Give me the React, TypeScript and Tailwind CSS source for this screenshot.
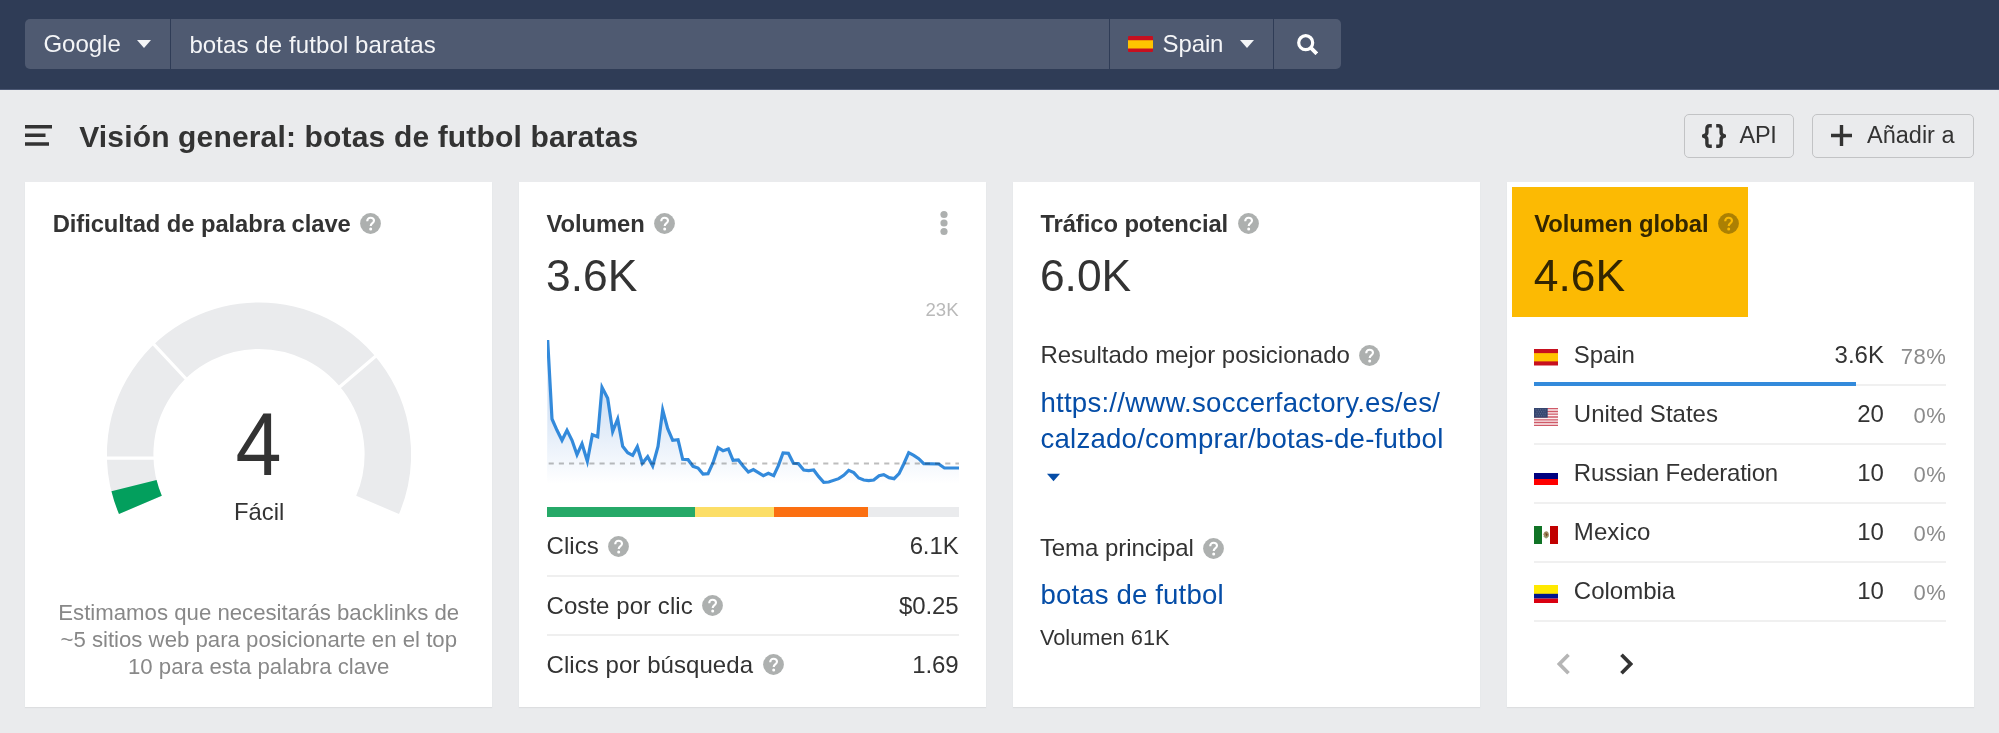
import type { ReactNode } from "react";

function HelpIcon() {
  return (
    <svg viewBox="0 0 21 21" className="h-[21px] w-[21px] shrink-0">
      <circle cx="10.5" cy="10.5" r="10.4" fill="#adb0af" />
      <path
        d="M7.2 8.2C7.2 6 8.6 4.8 10.6 4.8C12.6 4.8 14 6 14 7.7C14 10.1 10.7 10.1 10.7 13"
        fill="none"
        stroke="#fff"
        strokeWidth="2.1"
      />
      <circle cx="10.7" cy="15.9" r="1.5" fill="#fff" />
    </svg>
  );
}

function Caret({ className }: { className: string }) {
  return (
    <svg viewBox="0 0 14 8" className={className}>
      <path d="M0 0H14L7 8Z" fill="currentColor" />
    </svg>
  );
}

function SpainFlag({ className }: { className: string }) {
  return (
    <svg viewBox="0 0 24 16" preserveAspectRatio="none" className={className}>
      <path d="M0 0H24V16H0Z" fill="#c7101f" />
      <path d="M0 4H24V12H0Z" fill="#ffc400" />
    </svg>
  );
}

function UsFlag({ className }: { className: string }) {
  return (
    <svg viewBox="0 0 24 18" preserveAspectRatio="none" className={className}>
      <path d="M0 0H24V18H0Z" fill="#fbeff0" />
      <path
        d="M0 .7H24M0 3.5H24M0 6.2H24M0 9H24M0 11.8H24M0 14.5H24M0 17.3H24"
        stroke="#cf5a68"
        strokeWidth="1.3"
      />
      <path d="M0 0H13.7V9.7H0Z" fill="#35456f" />
      <path
        d="M1.5 1.8H13M2.5 3.8H12M1.5 5.8H13M2.5 7.8H12"
        stroke="#8791ac"
        strokeWidth=".6"
        strokeDasharray="1 1.3"
      />
    </svg>
  );
}

function RussiaFlag({ className }: { className: string }) {
  return (
    <svg viewBox="0 0 24 18" preserveAspectRatio="none" className={className}>
      <path d="M0 0H24V6H0Z" fill="#fff" />
      <path d="M0 6H24V12H0Z" fill="#00007f" />
      <path d="M0 12H24V18H0Z" fill="#fe0000" />
    </svg>
  );
}

function MexicoFlag({ className }: { className: string }) {
  return (
    <svg viewBox="0 0 24 18" preserveAspectRatio="none" className={className}>
      <path d="M0 0H24V18H0Z" fill="#fff" />
      <path d="M0 0H8V18H0Z" fill="#107326" />
      <path d="M16 0H24V18H16Z" fill="#c10000" />
      <path d="M9.4 8.2Q10 5.2 12.6 5.2Q15.2 6 14.8 9.5Q14 12 12 12.4Q9.8 11.6 9.4 8.2Z" fill="#a08a62" />
      <path d="M11.3 6.4L13.8 8.6L12.2 10.4Z" fill="#6d4424" />
      <path d="M9.6 10Q12 13.6 14.6 10" fill="none" stroke="#8ea77c" strokeWidth=".9" />
    </svg>
  );
}

function ColombiaFlag({ className }: { className: string }) {
  return (
    <svg viewBox="0 0 24 18" preserveAspectRatio="none" className={className}>
      <path d="M0 0H24V9H0Z" fill="#ffe900" />
      <path d="M0 8.8H24V13.6H0Z" fill="#00148e" />
      <path d="M0 13.6H24V18H0Z" fill="#da0010" />
    </svg>
  );
}

function TopBar() {
  return (
    <header className="flex h-[90px] shrink-0 items-start border-b border-[#4c5874] bg-[#2f3c56] pl-[25.4px] pt-[18.6px] text-[24px] leading-[50.6px] text-[#f4f5f7]">
      <div className="flex h-[50.6px] gap-px overflow-hidden rounded-[5px]">
        <button className="flex w-[145px] items-center bg-[#4f5a71] pl-[18px]">
          <span className="w-[76px] pt-px">Google</span>
          <Caret className="ml-[18px] mt-px h-2 w-3.5" />
        </button>
        <div className="w-[937.6px] bg-[#4f5a71] pl-[18px] pt-px tracking-[0.1px]">botas de futbol baratas</div>
        <button className="flex w-[163px] items-center bg-[#4f5a71] pl-[18.5px]">
          <SpainFlag className="h-[16.7px] w-[25px] rounded-[1px]" />
          <span className="ml-[9px] w-[59px] pt-px tracking-[-0.1px]">Spain</span>
          <Caret className="ml-[18.5px] mt-px h-2 w-3.5" />
        </button>
        <button className="flex w-[67px] items-center justify-center bg-[#4f5a71]">
          <svg viewBox="0 0 21 21" className="mt-px h-[21px] w-[21px]" fill="none" stroke="#fff">
            <circle cx="8.7" cy="8.7" r="7" strokeWidth="3.2" />
            <path d="M13.4 13.4L19.8 19.8" strokeWidth="3.8" />
          </svg>
        </button>
      </div>
    </header>
  );
}

function TitleRow() {
  return (
    <div className="flex h-[91.5px] items-start justify-between px-[25.4px] pt-[23.5px]">
      <div className="flex h-[44px] items-center">
        <svg viewBox="0 0 27 21" className="h-[21px] w-[27px]" stroke="#333" strokeWidth="3.4">
          <path d="M0 1.7H27M0 10.3H20.5M0 19H24" />
        </svg>
        <h1 className="ml-[26.8px] mt-[2px] text-[30px] font-bold leading-[40px] tracking-[0.16px]">
          Visión general: botas de futbol baratas
        </h1>
      </div>
      <div className="flex gap-[17.4px] text-[23.5px] leading-[42px]">
        <button className="flex h-[44.6px] w-[110px] items-center rounded-[5px] border-[1.7px] border-[#c2c3c5] pl-[17px]">
          <svg viewBox="0 0 24 24" className="h-6 w-6" fill="none" stroke="#333" strokeWidth="3.4">
            <path d="M9.8 1.8H7.6Q4.9 1.8 4.9 4.6V8.6Q4.9 11 1.4 12Q4.9 13 4.9 15.4V19.4Q4.9 22.2 7.6 22.2H9.8" />
            <path d="M14.2 1.8H16.4Q19.1 1.8 19.1 4.6V8.6Q19.1 11 22.6 12Q19.1 13 19.1 15.4V19.4Q19.1 22.2 16.4 22.2H14.2" />
          </svg>
          <span className="ml-[13.4px] -mt-px tracking-[-0.3px]">API</span>
        </button>
        <button className="flex h-[44.6px] w-[162px] items-center rounded-[5px] border-[1.7px] border-[#c2c3c5] pl-[18.4px]">
          <svg viewBox="0 0 21 21" className="h-[21px] w-[21px]" stroke="#333" strokeWidth="3.4">
            <path d="M10.5 0V21M0 10.5H21" />
          </svg>
          <span className="-mt-px ml-[15px]">Añadir a</span>
        </button>
      </div>
    </div>
  );
}

function Card({ title, menu, children }: { title: string; menu?: boolean; children: ReactNode }) {
  return (
    <section className="relative flex h-[525.5px] flex-col bg-white px-[27.4px] pt-[27.6px] shadow-[0_1px_1px_#dddee0]">
      <div className="flex h-[30px] shrink-0 items-center">
        <h2 className="text-[23.8px] font-bold leading-[30px] tracking-[-0.08px]">{title}</h2>
        <span className="-mt-[2px] ml-[9.5px]">
          <HelpIcon />
        </span>
        {menu && (
          <svg viewBox="0 0 8 26" className="-mt-[2px] ml-auto mr-[11px] h-[26px] w-2" fill="#adb0af">
            <circle cx="4" cy="4.5" r="3.6" />
            <circle cx="4" cy="13" r="3.6" />
            <circle cx="4" cy="21.5" r="3.6" />
          </svg>
        )}
      </div>
      {children}
    </section>
  );
}

function BigNumber({ children }: { children: ReactNode }) {
  return <div className="-ml-[0.5px] mt-[11.6px] shrink-0 text-[44.4px] leading-[49.6px]">{children}</div>;
}

function DifficultyCard() {
  return (
    <Card title="Dificultad de palabra clave">
      <svg
        viewBox="107 302 304 224"
        className="mt-[63px] h-[224px] w-[304px] shrink-0 self-center text-[#333]"
        fontFamily="Liberation Sans, Arial, sans-serif"
      >
        <path d="M140.4 504.9A128.85 128.85 0 1 1 377.6 504.9" fill="none" stroke="#eaebed" strokeWidth="46.5" />
        <path d="M140.4 504.9A128.85 128.85 0 0 1 134 485.7" fill="none" stroke="#039f5d" strokeWidth="46.5" />
        <path d="M105 458.1H156M189 382L152 342.3M337 389.3L378.5 353.8" stroke="#fff" strokeWidth="3.2" />
        <text transform="translate(258.5 475) scale(0.93 1)" fontSize="89" textAnchor="middle" fill="currentColor">
          4
        </text>
        <text x="259.2" y="520.3" fontSize="23.8" textAnchor="middle" fill="currentColor">
          Fácil
        </text>
      </svg>
      <p className="-mx-4 mt-[74.2px] text-center text-[22.2px] leading-[26.9px] text-[#888]">
        Estimamos que necesitarás backlinks de
        <br />
        ~5 sitios web para posicionarte en el top
        <br />
        10 para esta palabra clave
      </p>
    </Card>
  );
}

const TREND =
  "52,60 65,297 80,331 95,361 110,331 125,361 140,404 155,371 171,424 186,344 202,350 215,202 232,235 247,335 262,297 277,379 292,398 307,406 321,380 336,430 352,410 367,438 383,379 397,270 412,326 427,361 443,359 457,418 473,419 488,439 503,444 518,462 533,461 548,428 563,383 578,392 594,387 608,421 624,420 638,438 654,456 669,449 684,458 699,467 714,460 730,467 744,437 758,399 774,400 789,430 804,431 820,450 835,452 850,450 865,470 880,487 895,486 925,476 940,466 955,451 970,458 985,474 1000,480 1015,482 1030,480 1046,467 1060,464 1076,473 1091,476 1106,461 1120,432 1135,398 1150,406 1165,416 1180,431 1225,432 1242,444 1286,444";

function Metric({ label, value, last }: { label: string; value: string; last?: boolean }) {
  return (
    <div
      className={
        last
          ? "flex h-[59.2px] shrink-0 items-center pb-px"
          : "flex h-[59.2px] shrink-0 items-center border-b-2 border-[#efefef] pt-px"
      }
    >
      <span className="tracking-[0.06px]">{label}</span>
      <span className="ml-[9.5px]">
        <HelpIcon />
      </span>
      <span className="ml-auto tracking-[-0.1px]">{value}</span>
    </div>
  );
}

function VolumeCard() {
  return (
    <Card title="Volumen" menu>
      <BigNumber>3.6K</BigNumber>
      <div className="h-5 shrink-0 text-right text-[18.6px] leading-[20px] text-[#b9b9b9]">23K</div>
      <svg viewBox="50 51 1236 450" className="mt-[16.8px] h-[150px] w-full shrink-0" preserveAspectRatio="none">
        <defs>
          <linearGradient id="trendFill" gradientUnits="userSpaceOnUse" x1="0" y1="60" x2="0" y2="492">
            <stop offset="0" stopColor="#b3cdee" />
            <stop offset="1" stopColor="#ffffff" />
          </linearGradient>
        </defs>
        <polygon points={`${TREND} 1286,490 50,490`} fill="url(#trendFill)" />
        <polyline points={TREND} fill="none" stroke="#338adb" strokeWidth="9.6" strokeMiterlimit="10" />
        <path
          d="M55 430.5H1286"
          stroke="#bdbdbd"
          strokeWidth="5.4"
          strokeDasharray="15.3 15.2"
          className="mix-blend-multiply"
        />
      </svg>
      <div className="mt-5 flex h-[10.3px] shrink-0 bg-[#eaebed]">
        <div className="w-[36%] bg-[#26a968]" />
        <div className="w-[19.1%] bg-[#fcde67]" />
        <div className="w-[22.9%] bg-[#fb6f11]" />
      </div>
      <Metric label="Clics" value="6.1K" />
      <Metric label="Coste por clic" value="$0.25" />
      <Metric label="Clics por búsqueda" value="1.69" last />
    </Card>
  );
}

function TrafficCard() {
  return (
    <Card title="Tráfico potencial">
      <BigNumber>6.0K</BigNumber>
      <div className="mt-[40px] flex h-[30px] items-center">
        <span>Resultado mejor posicionado</span>
        <span className="ml-[9.5px]">
          <HelpIcon />
        </span>
      </div>
      <a className="-mr-4 mt-[14.4px] text-[27.6px] leading-[36.3px] tracking-[0.24px] text-[#054da7]">
        https://www.soccerfactory.es/es/
        <br />
        calzado/comprar/botas-de-futbol
      </a>
      <Caret className="ml-[7px] mt-[15.5px] h-[9px] w-[13px] text-[#054da7]" />
      <div className="mt-[51.7px] flex h-[30px] items-center">
        <span className="-ml-[0.5px] tracking-[-0.06px]">Tema principal</span>
        <span className="ml-[9.5px]">
          <HelpIcon />
        </span>
      </div>
      <a className="mt-[13.1px] text-[27.6px] leading-[36px] tracking-[0.15px] text-[#054da7]">botas de futbol</a>
      <div className="mt-[12.9px] text-[21.8px] leading-[26px] -ml-[0.5px]">Volumen 61K</div>
    </Card>
  );
}

const COUNTRIES = [
  {
    name: "Spain",
    value: "3.6K",
    share: "78%",
    Flag: SpainFlag,
    flagClass: "mt-[4px] h-[16.5px] w-6",
    nameClass: "ml-[15.6px] tracking-[-0.1px]",
  },
  {
    name: "United States",
    value: "20",
    share: "0%",
    Flag: UsFlag,
    flagClass: "mt-[5px] h-[18px] w-6",
    nameClass: "ml-[15.6px]",
  },
  {
    name: "Russian Federation",
    value: "10",
    share: "0%",
    Flag: RussiaFlag,
    flagClass: "mt-[5px] h-[18px] w-6",
    nameClass: "ml-[15.6px] tracking-[-0.22px]",
  },
  {
    name: "Mexico",
    value: "10",
    share: "0%",
    Flag: MexicoFlag,
    flagClass: "mt-[5px] h-[18px] w-6",
    nameClass: "ml-[15.6px] tracking-[0.1px]",
  },
  {
    name: "Colombia",
    value: "10",
    share: "0%",
    Flag: ColombiaFlag,
    flagClass: "mt-[5px] h-[18px] w-6",
    nameClass: "ml-[15.6px]",
  },
];

function GlobalVolumeCard() {
  return (
    <Card title="Volumen global">
      <BigNumber>4.6K</BigNumber>
      <div className="mt-[27px] flex flex-col">
        {COUNTRIES.map(({ name, value, share, Flag, flagClass, nameClass }, i) => (
          <div key={name} className="relative flex h-[59px] items-center border-b-2 border-[#f0f0f0] pb-px">
            <Flag className={flagClass} />
            <span className={nameClass}>{name}</span>
            <span className="ml-auto">{value}</span>
            <span className="w-[62.4px] pt-[2px] text-right text-[22px] tracking-[0.5px] text-[#8b8b8b]">
              {share}
            </span>
            {i === 0 && <span className="absolute -bottom-[2px] left-0 h-1 w-[78%] bg-[#338adb]" />}
          </div>
        ))}
      </div>
      <svg viewBox="0 0 76 22" className="ml-[23px] mt-[30.5px] h-[22px] w-[76px]" fill="none" strokeWidth="3.7">
        <path d="M11.5 1.8L2.4 11L11.5 20.2" stroke="#b5b5b5" />
        <path d="M64.5 1.8L73.6 11L64.5 20.2" stroke="#333" />
      </svg>
      <div className="pointer-events-none absolute left-[5px] top-[5.7px] h-[129.5px] w-[236px] bg-[#fcba03] mix-blend-multiply" />
    </Card>
  );
}

export default function App() {
  return (
    <div
      className="flex h-[733px] w-[1999px] flex-col overflow-hidden bg-[#eaebed] text-[24px] text-[#333]"
      style={{ fontFamily: '"Liberation Sans", Arial, sans-serif' }}
    >
      <TopBar />
      <TitleRow />
      <main className="grid grid-cols-4 gap-[27px] px-[25.3px]">
        <DifficultyCard />
        <VolumeCard />
        <TrafficCard />
        <GlobalVolumeCard />
      </main>
    </div>
  );
}
